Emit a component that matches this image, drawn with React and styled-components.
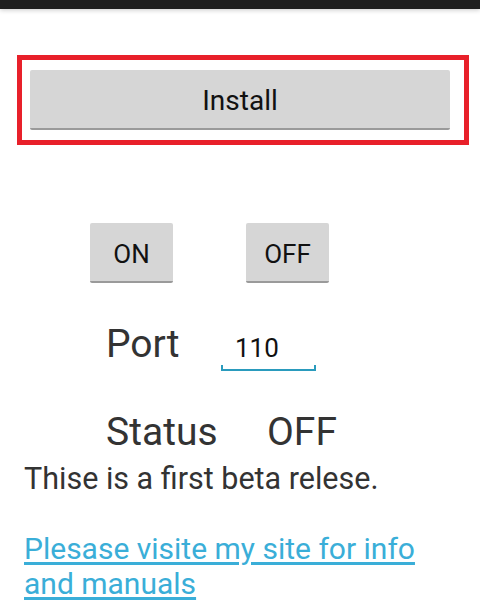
import styled, { createGlobalStyle } from "styled-components";

const GlobalStyle = createGlobalStyle`
  html, body {
    margin: 0;
    padding: 0;
    background: #ffffff;
    font-family: Roboto, "Noto Sans", sans-serif;
  }
`;

const Screen = styled.div`
  width: 480px;
  height: 600px;
  overflow: hidden;
  background: #fff;
`;

const StatusBar = styled.div`
  height: 9px;
  background: #1f1f1f;
  box-shadow: 0 1px 5px rgba(0, 0, 0, 0.22);
`;

const Highlight = styled.div`
  margin: 46px 11px 0 17px;
  border: 5px solid #e8202a;
  padding: 10px 14px 10px 8px;
`;

const Button = styled.button`
  display: flex;
  align-items: center;
  justify-content: center;
  width: ${({ $width }) => $width || "100%"};
  height: 60px;
  padding: 3px 0 0;
  border: none;
  border-bottom: 2px solid #9a9a9a;
  border-radius: 2px;
  background: #d6d6d6;
  color: #111;
  font-family: Roboto, sans-serif;
  font-size: ${({ $size }) => $size || "28px"};
  box-sizing: border-box;
`;

const ToggleRow = styled.div`
  display: flex;
  gap: 73px;
  padding-left: 90px;
  margin-top: 78px;
`;

const InfoRow = styled.div`
  display: flex;
  align-items: baseline;
  padding-left: 106px;
  margin-top: ${({ $top }) => $top};
`;

const Label = styled.span`
  width: ${({ $width }) => $width};
  font-size: 39px;
  line-height: 44px;
  color: #333;
`;

const Value = styled.span`
  font-size: 39px;
  line-height: 44px;
  color: #333;
`;

const Field = styled.div`
  position: relative;
  width: 95px;
  box-sizing: border-box;
  padding: 0 0 6px 14px;
  font-size: 26px;
  line-height: 30px;
  color: #111;
  border-bottom: 2px solid #2a9bbd;

  &::before,
  &::after {
    content: "";
    position: absolute;
    bottom: -2px;
    width: 2px;
    height: 6px;
    background: #2a9bbd;
  }
  &::before {
    left: 0;
  }
  &::after {
    right: 0;
  }
`;

const Note = styled.p`
  margin: 7px 0 0;
  padding: 0 24px;
  font-size: 30.5px;
  line-height: 35px;
  color: #333;
`;

const SiteLink = styled.a`
  display: block;
  margin: 35px 0 0;
  padding: 0 24px;
  font-size: 30px;
  line-height: 35px;
  color: #3aaed8;
  text-decoration: underline;
  text-underline-offset: 3px;
`;

export default function App() {
  return (
    <Screen>
      <GlobalStyle />
      <StatusBar />
      <Highlight>
        <Button>Install</Button>
      </Highlight>
      <ToggleRow>
        <Button $width="83px" $size="26px">ON</Button>
        <Button $width="83px" $size="26px">OFF</Button>
      </ToggleRow>
      <InfoRow $top="39px">
        <Label $width="115px">Port</Label>
        <Field>110</Field>
      </InfoRow>
      <InfoRow $top="39px">
        <Label $width="161px">Status</Label>
        <Value>OFF</Value>
      </InfoRow>
      <Note>Thise is a first beta relese.</Note>
      <SiteLink href="#">Plesase visite my site for info and manuals</SiteLink>
    </Screen>
  );
}
